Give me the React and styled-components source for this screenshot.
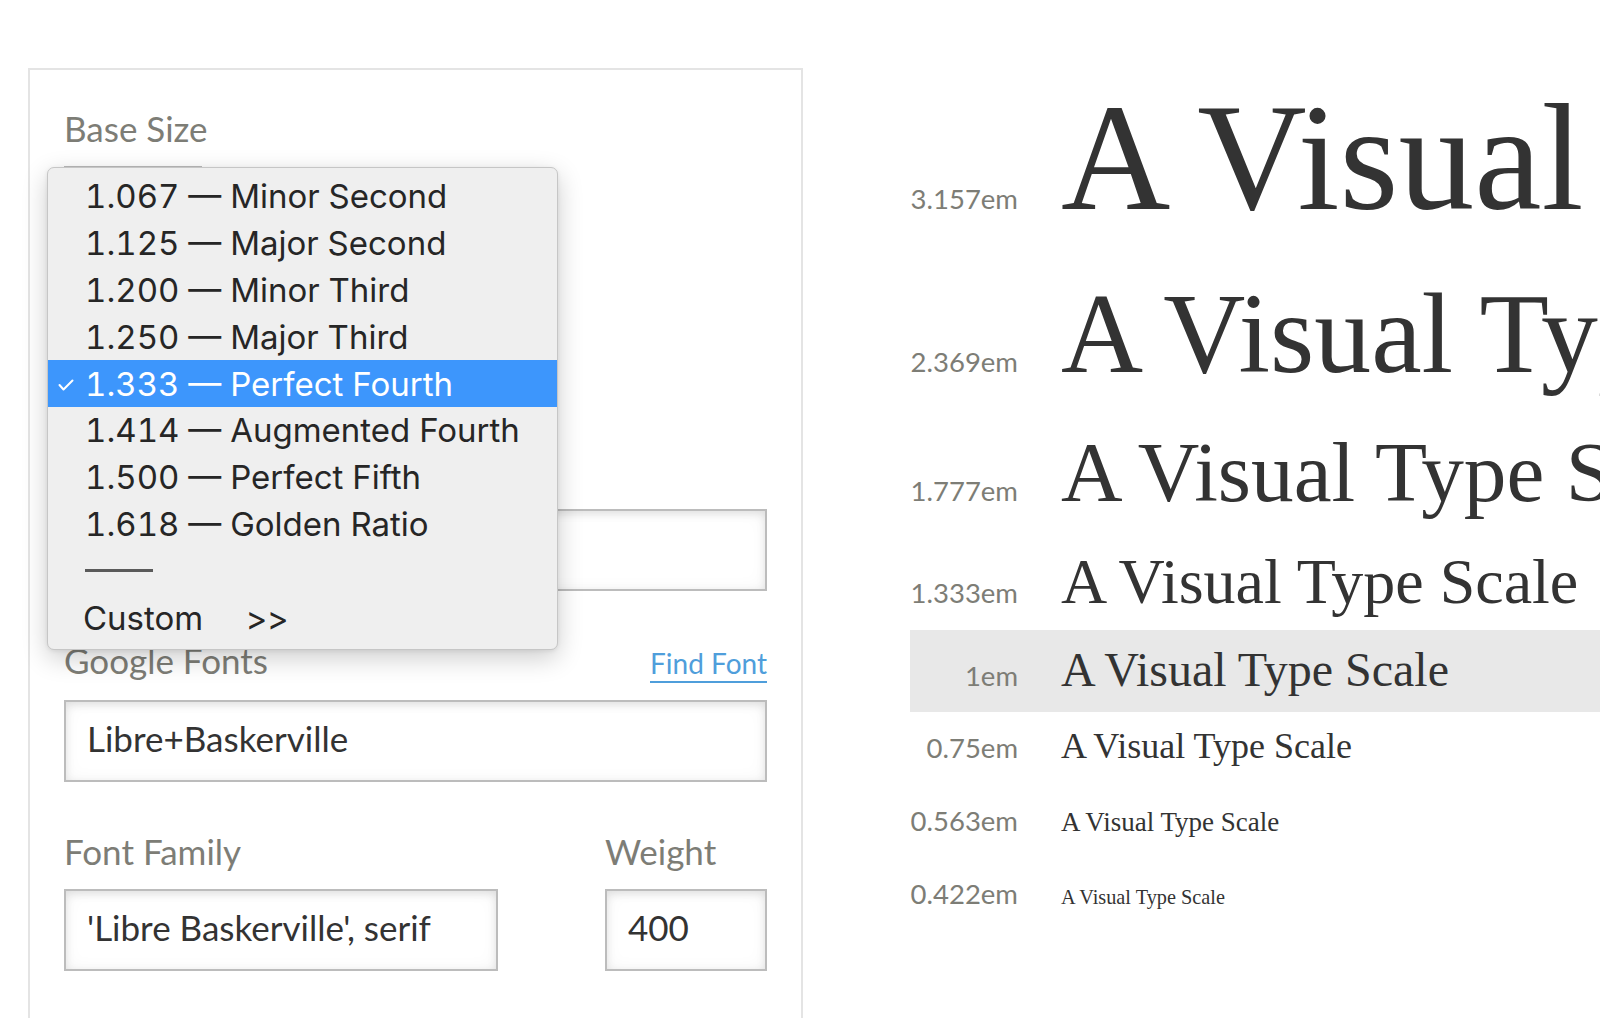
import React from "react";
import styled, { createGlobalStyle } from "styled-components";

const GlobalStyle = createGlobalStyle`
  html, body {
    margin: 0;
    padding: 0;
    background: #ffffff;
    overflow: hidden;
  }
  body {
    font-family: Lato, "Open Sans", sans-serif;
    -webkit-font-smoothing: antialiased;
  }
`;

const Page = styled.div`
  display: flex;
  align-items: flex-start;
  gap: 107px;
  width: 1600px;
  height: 1018px;
  padding-left: 28px;
  box-sizing: border-box;
  overflow: hidden;
`;

const Panel = styled.section`
  position: relative;
  flex: 0 0 775px;
  box-sizing: border-box;
  margin-top: 68px;
  min-height: 1100px;
  border: 2px solid #e4e4e4;
  padding: 37px 34px 0 34px;
  display: flex;
  flex-direction: column;
  gap: 48px;
`;

const Field = styled.div`
  display: flex;
  flex-direction: column;
  min-width: 0;
`;

const FieldRow = styled.div`
  display: grid;
  grid-template-columns: 434px 162px;
  justify-content: space-between;
`;

const LabelRow = styled.div`
  display: flex;
  justify-content: space-between;
  align-items: baseline;
  margin-bottom: 17px;
`;

const Label = styled.label`
  font-family: Lato, "Open Sans", sans-serif;
  font-size: 35px;
  line-height: 42px;
  color: #7d7d76;
`;

const FindLink = styled.a`
  font-family: Lato, "Open Sans", sans-serif;
  font-size: 28px;
  line-height: 1.2;
  color: #4f9edb;
  text-decoration: none;
  border-bottom: 2px solid #4f9edb;
`;

const Box = styled.input`
  display: block;
  box-sizing: border-box;
  width: ${(p) => p.$width || "100%"};
  height: ${(p) => p.$height || 82}px;
  margin: 0;
  padding: 0 21px 5px;
  border: 2px solid #bcbcbc;
  border-radius: 0;
  background: #ffffff;
  box-shadow: inset 0 3px 9px rgba(0, 0, 0, 0.11), inset 0 0 18px rgba(0, 0, 0, 0.04);
  font-family: Lato, "Open Sans", sans-serif;
  font-size: 35px;
  color: #333333;
  outline: none;
`;

const Menu = styled.ul`
  position: absolute;
  left: 17px;
  top: 97px;
  width: 511px;
  box-sizing: border-box;
  margin: 0;
  padding: 5px 0 8px;
  list-style: none;
  background: #efefef;
  border: 1px solid #c6c6c6;
  border-radius: 7px;
  box-shadow: 0 8px 26px rgba(0, 0, 0, 0.2), 0 1px 4px rgba(0, 0, 0, 0.08);
  font-family: Inter, Roboto, "Noto Sans", sans-serif;
  font-size: 33px;
  font-variant-numeric: tabular-nums;
  overflow: hidden;
`;

const MenuItem = styled.li`
  position: relative;
  height: 46.8px;
  display: flex;
  align-items: center;
  padding-left: 37px;
  white-space: nowrap;
  color: ${(p) => (p.$selected ? "#ffffff" : "#262626")};
  background: ${(p) => (p.$selected ? "#3d96fc" : "transparent")};
`;

const Check = styled.svg`
  position: absolute;
  left: 10px;
  top: 50%;
  width: 16px;
  height: 12px;
  margin-top: -5px;
`;

const Rule = styled.span`
  display: block;
  width: 68px;
  height: 3px;
  background: #5a5a5a;
`;

const CustomText = styled.span`
  margin-left: -2px;
`;

const Arrows = styled.span`
  margin-left: 43px;
`;

const Preview = styled.div`
  flex: 1;
  min-width: 0;
  margin-top: 59px;
  display: flex;
  flex-direction: column;
`;

const ScaleRow = styled.div`
  display: flex;
  align-items: baseline;
  padding: 11.8px 0;
  white-space: nowrap;
  background: ${(p) => (p.$active ? "#e8e8e8" : "transparent")};
`;

const EmLabel = styled.span`
  flex: 0 0 108px;
  margin-right: 43px;
  text-align: right;
  font-family: Lato, "Open Sans", sans-serif;
  font-size: 27.5px;
  line-height: 49px;
  color: #7d7d76;
`;

const Sample = styled.span`
  font-family: "Liberation Serif", "Times New Roman", serif;
  font-size: ${(p) => p.$size}px;
  line-height: 1.15;
  color: #333333;
`;

const BASE = 48;

const scales = [
  { label: "3.157em", ratio: 3.157, text: "A Visual Type Scale" },
  { label: "2.369em", ratio: 2.369, text: "A Visual Type Scale" },
  { label: "1.777em", ratio: 1.777, text: "A Visual Type Scale" },
  { label: "1.333em", ratio: 1.333, text: "A Visual Type Scale" },
  { label: "1em", ratio: 1, text: "A Visual Type Scale", active: true },
  { label: "0.75em", ratio: 0.75, text: "A Visual Type Scale" },
  { label: "0.563em", ratio: 0.563, text: "A Visual Type Scale" },
  { label: "0.422em", ratio: 0.422, text: "A Visual Type Scale" },
];

const options = [
  "1.067 — Minor Second",
  "1.125 — Major Second",
  "1.200 — Minor Third",
  "1.250 — Major Third",
  "1.333 — Perfect Fourth",
  "1.414 — Augmented Fourth",
  "1.500 — Perfect Fifth",
  "1.618 — Golden Ratio",
];

export default function App() {
  return (
    <>
      <GlobalStyle />
      <Page>
        <Panel>
          <Field>
            <LabelRow>
              <Label>Base Size</Label>
            </LabelRow>
            <Box readOnly value="" $width="138px" />
          </Field>
          <Field>
            <LabelRow>
              <Label>{"\u00a0"}</Label>
            </LabelRow>
            <Box readOnly value="" $width="420px" $height={47} />
          </Field>
          <Field>
            <LabelRow>
              <Label>{"\u00a0"}</Label>
            </LabelRow>
            <Box readOnly value="" />
          </Field>
          <Field>
            <LabelRow>
              <Label>Google Fonts</Label>
              <FindLink href="#">Find Font</FindLink>
            </LabelRow>
            <Box readOnly value="Libre+Baskerville" />
          </Field>
          <FieldRow>
            <Field>
              <LabelRow>
                <Label>Font Family</Label>
              </LabelRow>
              <Box readOnly value="'Libre Baskerville', serif" />
            </Field>
            <Field>
              <LabelRow>
                <Label>Weight</Label>
              </LabelRow>
              <Box readOnly value="400" />
            </Field>
          </FieldRow>

          <Menu role="listbox">
            {options.map((o) => {
              const selected = o.startsWith("1.333");
              return (
                <MenuItem key={o} $selected={selected}>
                  {selected && (
                    <Check viewBox="0 0 16 12" aria-hidden="true">
                      <polyline
                        points="1.5,6 5.5,10.5 14.5,1.5"
                        fill="none"
                        stroke="#ffffff"
                        strokeWidth="2"
                        strokeLinecap="round"
                        strokeLinejoin="round"
                      />
                    </Check>
                  )}
                  {o}
                </MenuItem>
              );
            })}
            <MenuItem>
              <Rule />
            </MenuItem>
            <MenuItem>
              <CustomText>Custom</CustomText>
              <Arrows>&gt;&gt;</Arrows>
            </MenuItem>
          </Menu>
        </Panel>

        <Preview>
          {scales.map((s) => (
            <ScaleRow key={s.label} $active={s.active}>
              <EmLabel>{s.label}</EmLabel>
              <Sample $size={+(BASE * s.ratio).toFixed(1)}>{s.text}</Sample>
            </ScaleRow>
          ))}
        </Preview>
      </Page>
    </>
  );
}
